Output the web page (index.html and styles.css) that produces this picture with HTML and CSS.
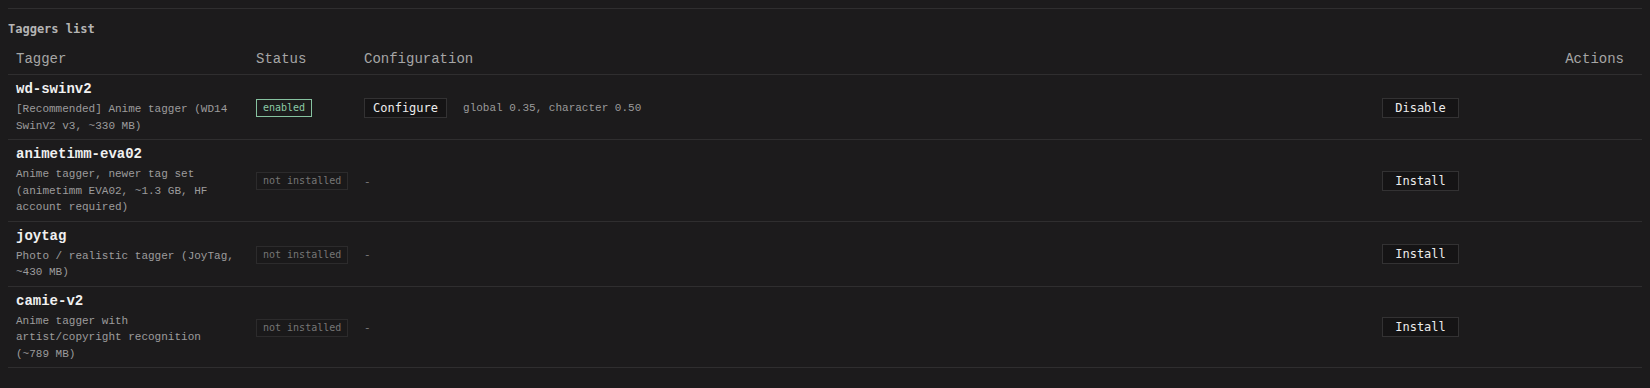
FILE: index.html
```html
<!DOCTYPE html>
<html>
<head>
<meta charset="utf-8">
<link rel="stylesheet" href="styles.css">
</head>
<body>
<section class="panel">
  <h3 class="caption">Taggers list</h3>
  <table class="taggers">
    <colgroup>
      <col class="c-tagger">
      <col class="c-status">
      <col class="c-config">
      <col class="c-actions">
    </colgroup>
    <thead>
      <tr>
        <th>Tagger</th>
        <th>Status</th>
        <th>Configuration</th>
        <th class="th-actions">Actions</th>
      </tr>
    </thead>
    <tbody>
      <tr>
        <td>
          <div class="name">wd-swinv2</div>
          <div class="desc">[Recommended] Anime tagger (WD14 SwinV2 v3, ~330 MB)</div>
        </td>
        <td><span class="badge badge-on">enabled</span></td>
        <td><div class="config"><button class="btn">Configure</button><span class="config-text">global 0.35, character 0.50</span></div></td>
        <td><button class="btn btn-action">Disable</button></td>
      </tr>
      <tr>
        <td>
          <div class="name">animetimm-eva02</div>
          <div class="desc">Anime tagger, newer tag set (animetimm EVA02, ~1.3 GB, HF account required)</div>
        </td>
        <td><span class="badge badge-off">not installed</span></td>
        <td><span class="dash">-</span></td>
        <td><button class="btn btn-action">Install</button></td>
      </tr>
      <tr>
        <td>
          <div class="name">joytag</div>
          <div class="desc">Photo / realistic tagger (JoyTag, ~430 MB)</div>
        </td>
        <td><span class="badge badge-off">not installed</span></td>
        <td><span class="dash">-</span></td>
        <td><button class="btn btn-action">Install</button></td>
      </tr>
      <tr>
        <td>
          <div class="name">camie-v2</div>
          <div class="desc">Anime tagger with artist/copyright recognition (~789 MB)</div>
        </td>
        <td><span class="badge badge-off">not installed</span></td>
        <td><span class="dash">-</span></td>
        <td><button class="btn btn-action">Install</button></td>
      </tr>
    </tbody>
  </table>
</section>
</body>
</html>
```
FILE: styles.css
```css
html, body {
  background: #1c1b1c;
}
body {
  margin: 8px;
  color: #a8a8a8;
  font-family: "Liberation Mono", monospace;
}
.panel {
  border-top: 1px solid #2f2e2f;
  padding-top: 12px;
}
.caption {
  margin: 0 0 3px 0;
  font-family: "DejaVu Sans Mono", monospace;
  font-size: 12px;
  line-height: 17px;
  font-weight: bold;
  color: #b4b4b4;
}
.taggers {
  width: 100%;
  border-collapse: collapse;
  table-layout: fixed;
}
.c-tagger { width: 240px; }
.c-status { width: 108px; }
.c-actions { width: 268px; }
th {
  text-align: left;
  font-weight: normal;
  font-size: 14px;
  line-height: 17px;
  color: #a6a6a6;
  padding: 10px 8px 6px 8px;
  border-bottom: 1px solid #2f2e2f;
}
.th-actions {
  text-align: right;
  padding-right: 18px;
}
td {
  padding: 6px 8px 5px 8px;
  border-bottom: 1px solid #2f2e2f;
  vertical-align: middle;
}
.name {
  font-size: 14px;
  line-height: 16px;
  font-weight: bold;
  color: #f0f0f0;
  margin-bottom: 4px;
}
.desc {
  font-size: 11px;
  line-height: 16.5px;
  color: #9c9c9c;
}
.badge {
  display: inline-block;
  white-space: nowrap;
  font-family: "DejaVu Sans Mono", monospace;
  font-size: 10px;
  line-height: 16px;
  padding: 0 6px;
  border: 1px solid #2c2b2c;
}
.badge-on {
  color: #8ccaa6;
  border-color: #86c2a0;
}
.badge-off {
  color: #767676;
  background: #1a191a;
}
.config {
  display: flex;
  align-items: center;
  gap: 16px;
}
.btn {
  font-family: "DejaVu Sans Mono", monospace;
  font-size: 12px;
  line-height: 18px;
  padding: 0 8px;
  color: #ececec;
  background: #151415;
  border: 1px solid #333233;
  border-radius: 0;
  margin: 0;
  box-sizing: border-box;
  white-space: nowrap;
}
.btn-action {
  min-width: 77px;
  text-align: center;
}
.config-text {
  font-size: 11px;
  color: #9a9a9a;
}
.dash {
  font-size: 11px;
  color: #7a7a7a;
}
```
